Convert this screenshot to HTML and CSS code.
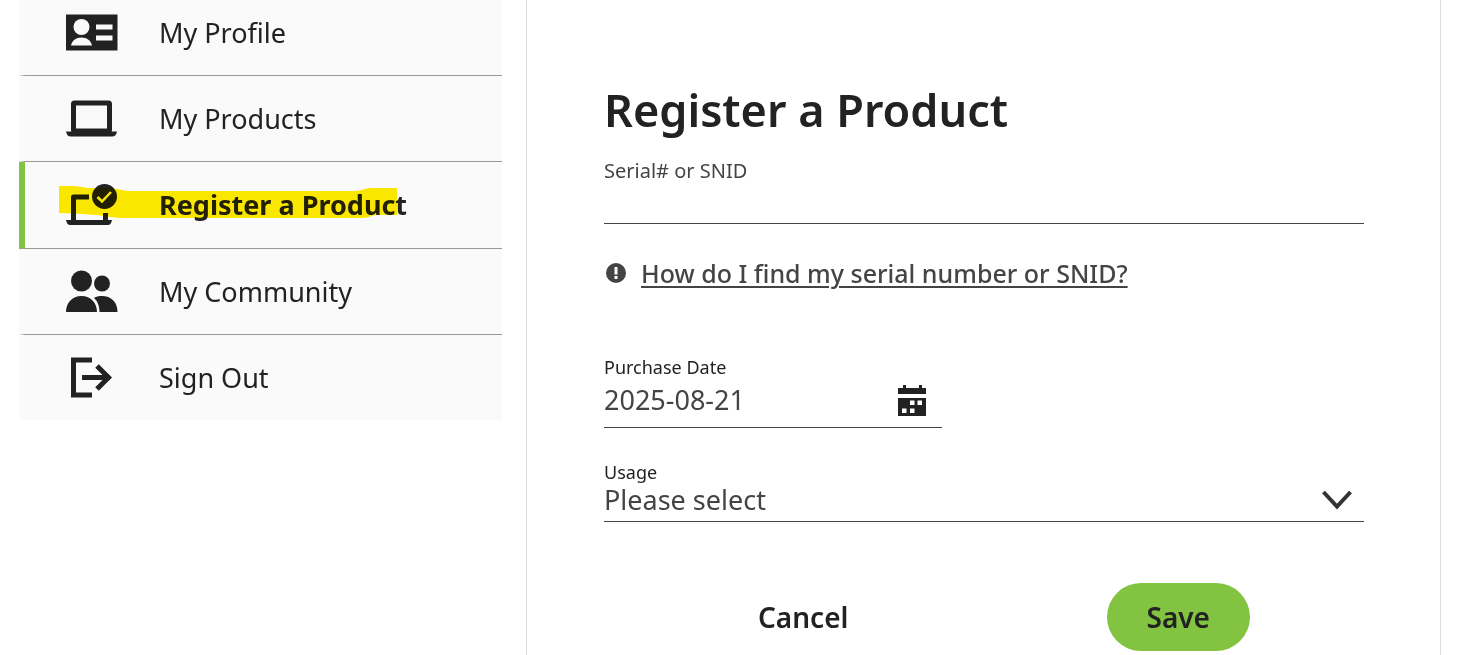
FILE: index.html
```html
<!doctype html>
<html lang="en">
<head>
    <meta charset="UTF-8">
    <meta name="viewport" content="width=device-width, initial-scale=1">
    <title>Register a Product</title>
    <link rel="stylesheet" href="styles.css">
</head>
<body>
<div class="page">
    <nav class="sidebar">
        <ul>
            <li>
                <a href="#profile">
                    <svg class="icon" viewBox="0 0 52 44">
                        <path fill="#222" d="M0 3.500h51.500v36H0z"/>
                        <circle cx="15.500" cy="16" r="8" fill="#fafafa"/>
                        <path fill="#fafafa" d="M5 34.500c1-5 5-8 10.500-8s9.500 3 10.500 8zM30 13.500h16.500v5H30zM30 24.500h16.500v5H30z"/>
                    </svg>
                    <span>My Profile</span>
                </a>
            </li>
            <li>
                <a href="#products">
                    <svg class="icon" viewBox="0 0 52 44">
                        <rect x="7.500" y="6" width="36" height="28" rx="1" fill="#fafafa" stroke="#222" stroke-width="5"/>
                        <path fill="#222" d="M0 34.500h51c-.500 3-2 5-5 5H5c-3 0-4.500-2-5-5z"/>
                    </svg>
                    <span>My Products</span>
                </a>
            </li>
            <li class="active">
                <a href="#register">
                    <svg class="icon" viewBox="0 0 52 44">
                        <path fill="none" stroke="#222" stroke-width="5" stroke-linejoin="round" d="M23 14H7.500v25M39.500 30v9"/>
                        <path fill="#222" d="M0 37h46c-.500 3-2 5-4 5H4c-2 0-3.500-2-4-5z"/>
                        <circle cx="38.500" cy="13.500" r="12.500" fill="#222"/>
                        <path fill="none" stroke="#fafafa" stroke-width="2.500" d="M31.500 14l4.500 4.500 9-9.500"/>
                    </svg>
                    <span>Register a Product</span>
                </a>
                <svg class="marker" viewBox="0 0 340 36" aria-hidden="true">
                    <path fill="#ffec00" d="M1 1h12c8 0 12 2 20 2h18c8 0 12 3 22 3h224c8 0 8-3 16-3h26v27h-20c-6 0-7 3-15 3H68c-14 0-18-2-30-3C24 29 12 28 1 28z"/>
                </svg>
            </li>
            <li>
                <a href="#community">
                    <svg class="icon" viewBox="0 0 52 44">
                        <g fill="#222">
                            <circle cx="15.500" cy="11" r="10.500"/>
                            <circle cx="36" cy="13.500" r="8"/>
                            <path d="M0 42c0-9 6-16 15.500-16S31 33 31 42zM33.500 42c0-6-2-11-5.500-14 2-1.500 5-2 8-2 9 0 15.500 6 15.500 16z"/>
                        </g>
                    </svg>
                    <span>My Community</span>
                </a>
            </li>
            <li>
                <a href="#signout">
                    <svg class="icon" viewBox="0 0 52 44">
                        <path fill="none" stroke="#222" stroke-width="5" d="M26 4H7.500v35H26M16 21.500h28M31 10l11.500 11.500L31 33"/>
                    </svg>
                    <span>Sign Out</span>
                </a>
            </li>
        </ul>
    </nav>

    <main class="content">
        <h1>Register a Product</h1>
        <form>
            <div class="field serial">
                <label for="serial">Serial# or SNID</label>
                <input type="text" id="serial">
            </div>
            <p class="help">
                <svg viewBox="0 0 20 20">
                    <circle cx="10" cy="10" r="10" fill="#444"/>
                    <path fill="#fff" d="M8.500 4h3v7.500h-3zM8.500 13h3v3h-3z"/>
                </svg>
                <a href="#find-serial">How do I find my serial number or SNID?</a>
            </p>
            <div class="field date">
                <label for="date">Purchase Date</label>
                <div class="control">
                    <input type="text" id="date" value="2025-08-21">
                    <button type="button" class="calendar" aria-label="Choose date">
                        <svg viewBox="0 0 30 32">
                            <path fill="#222" d="M1 3h5V0h3v3h13V0h3v3h4v6H1zM1 13h28v18H1z"/>
                            <path fill="#fff" d="M13 15.500h4.500V20H13zM20.500 15.500H25V20h-4.500zM5 23.500h4.500V28H5zM13 23.500h4.500V28H13z"/>
                        </svg>
                    </button>
                </div>
            </div>
            <div class="field usage">
                <label for="usage">Usage</label>
                <div class="control">
                    <select id="usage">
                        <option>Please select</option>
                    </select>
                    <svg class="arrow" viewBox="0 0 30 20">
                        <path fill="none" stroke="#333" stroke-width="4" d="M1.500 2L15 16.500 28.500 2"/>
                    </svg>
                </div>
            </div>
            <div class="buttons">
                <button type="button" class="cancel">Cancel</button>
                <button type="submit" class="save">Save</button>
            </div>
        </form>
    </main>
</div>
</body>
</html>
```
FILE: styles.css
```css
*{margin:0;padding:0;box-sizing:border-box;}
body{
    font-family:"Noto Sans",sans-serif;
    color:#222;
    background:#fff;
}
a{color:inherit;}
button,input,select{
    font-family:inherit;
    color:inherit;
    border:0;
    background:none;
}
.page{
    display:flex;
    min-height:100vh;
    padding:0 29px 0 19px;
}

/* sidebar */
.sidebar{
    flex:0 0 483px;
    margin-right:24px;
}
.sidebar ul{list-style:none;}
.sidebar li{
    position:relative;
    background:#fafafa;
    border-left:6px solid #fafafa;
    border-bottom:1px solid #999;
}
.sidebar li:last-child{border-bottom:0;}
.sidebar li.active{border-left-color:#82c341;}
.sidebar a{
    display:flex;
    align-items:center;
    gap:41px;
    height:85px;
    padding-left:41px;
    font-size:27px;
    line-height:40px;
    text-decoration:none;
}
.sidebar li:first-child a{
    height:75px;
    padding-bottom:10px;
}
.sidebar li.active a{
    height:86px;
    font-weight:700;
}
.icon{
    flex:none;
    width:52px;
    height:44px;
}
.marker{
    position:absolute;
    left:33px;
    top:23px;
    width:340px;
    height:36px;
    mix-blend-mode:multiply;
    pointer-events:none;
}

/* form */
.content{
    flex:1;
    padding:80px 76px 4px 77px;
    border:solid #ddd;
    border-width:0 1px;
}
h1{
    font-size:45px;
    font-weight:600;
    line-height:60px;
}
.field{border-bottom:1px solid #444;}
.field label{
    display:block;
    font-size:18px;
    line-height:24px;
}
.field input,.field select{
    display:block;
    width:100%;
    height:40px;
    font-size:27px;
    color:#444;
    outline:none;
}
.field.serial{margin-top:17px;}
.field.serial label{
    font-size:20px;
    line-height:28px;
    color:#444;
}
.field.serial input{height:38px;}
.help{
    display:flex;
    align-items:center;
    gap:15px;
    margin-top:31px;
    font-size:25px;
    font-weight:500;
    line-height:36px;
    color:#444;
}
.help svg{
    width:20px;
    height:20px;
    margin-left:2px;
}
.help a{
    text-decoration-thickness:2px;
    text-underline-offset:3px;
}
.control{
    display:flex;
    align-items:center;
}
.field.date{
    width:338px;
    margin-top:64px;
    padding-bottom:8px;
}
.field.date input{
    flex:1;
    min-width:0;
}
.calendar{
    width:30px;
    height:32px;
    margin:4px 15px 0 0;
    cursor:pointer;
}
.calendar svg{display:block;}
.field.usage{
    margin-top:32px;
    padding-bottom:6px;
}
.field.usage .control{position:relative;}
.field.usage select{
    height:31px;
    line-height:30px;
    appearance:none;
}
.arrow{
    position:absolute;
    right:12px;
    width:30px;
    height:20px;
    pointer-events:none;
}
.buttons{
    display:flex;
    justify-content:space-between;
    margin-top:61px;
    padding:0 15%;
}
.buttons button{
    height:68px;
    padding:0 40px;
    border-radius:34px;
    font-size:28px;
    font-weight:600;
    cursor:pointer;
}
.save{background:#82c341;}
```
